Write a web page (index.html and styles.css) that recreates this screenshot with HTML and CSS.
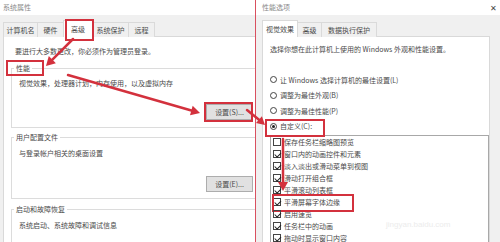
FILE: index.html
```html
<!DOCTYPE html>
<html>
	<head>
		<meta charset="UTF-8">
		<title>系统属性 - 性能选项</title>
		<link rel="stylesheet" href="styles.css">
	</head>
	<body>
		<div class="screen">

			<!-- 左边: 系统属性 -->
			<div class="win sys">
				<div class="title">系统属性</div>
				<div class="tabbar">
					<span class="tab w1">计算机名</span>
					<span class="tab w2">硬件</span>
					<span class="tab on w3 hl hl-tab">高级</span>
					<span class="tab w4">系统保护</span>
					<span class="tab w5">远程</span>
				</div>
				<div class="panel">
					<p class="note">要进行大多数更改，你必须作为管理员登录。</p>
					<fieldset class="group g1">
						<legend><span class="hl hl-legend">性能</span></legend>
						<p class="desc">视觉效果，处理器计划，内存使用，以及虚拟内存</p>
						<div class="btnrow r1"><span class="btn hl hl-btn">设置(S)...</span></div>
					</fieldset>
					<fieldset class="group g2">
						<legend>用户配置文件</legend>
						<p class="desc">与登录帐户相关的桌面设置</p>
						<div class="btnrow r2"><span class="btn">设置(E)...</span></div>
					</fieldset>
					<fieldset class="group g3">
						<legend>启动和故障恢复</legend>
						<p class="desc">系统启动、系统故障和调试信息</p>
					</fieldset>
				</div>
			</div>

			<!-- 右边: 性能选项 -->
			<div class="win perf">
				<div class="title"><span>性能选项</span><span class="close">✕</span></div>
				<div class="tabbar">
					<span class="tab on p1">视觉效果</span>
					<span class="tab p2">高级</span>
					<span class="tab p3">数据执行保护</span>
				</div>
				<div class="panel">
					<p class="intro">选择你想在此计算机上使用的 Windows 外观和性能设置。</p>
					<div class="radios">
						<div class="radio"><span class="dot"></span>让 Windows 选择计算机的最佳设置(L)</div>
						<div class="radio"><span class="dot"></span>调整为最佳外观(B)</div>
						<div class="radio"><span class="dot"></span>调整为最佳性能(P)</div>
						<div class="radio hl hl-radio"><span class="dot sel"></span>自定义(C):</div>
					</div>
					<div class="list">
						<div class="item"><span class="cb"></span>保存任务栏缩略图预览</div>
						<div class="item"><span class="cb on"></span>窗口内的动画控件和元素</div>
						<div class="item"><span class="cb on"></span>淡入淡出或滑动菜单到视图</div>
						<div class="item"><span class="cb on"></span>滑动打开组合框</div>
						<div class="item"><span class="cb on"></span>平滑滚动列表框</div>
						<div class="item hl hl-item"><span class="cb on"></span>平滑屏幕字体边缘</div>
						<div class="item"><span class="cb on"></span>启用速览</div>
						<div class="item"><span class="cb on"></span>任务栏中的动画</div>
						<div class="item"><span class="cb on"></span>拖动时显示窗口内容</div>
					</div>
				</div>
			</div>

			<!-- 红色箭头标注 -->
			<svg class="arrows" width="500" height="242" viewBox="0 0 500 242">
				<g stroke="#d3313d" stroke-width="2.5" stroke-linecap="round" fill="none">
					<path d="M73 39 L52.4 59.6"/>
					<path d="M68 75 L191.4 110.5"/>
					<path d="M247 110 L259 119.7"/>
					<path d="M283 139 L283 183"/>
				</g>
				<g fill="#d3313d">
					<polygon points="46,66 55.9,63.2 48.8,56.1"/>
					<polygon points="200,113 190,115.3 192.7,105.7"/>
					<polygon points="265,125 256,123.1 261.9,116.3"/>
					<polygon points="283,191 278,182 288,182"/>
				</g>
			</svg>
			<div class="watermark">jingyan.baidu.com</div>
		</div>
	</body>
</html>
```

FILE: styles.css
```css
*{
	box-sizing:border-box;
}
body{
	margin:0;
	background-color:#fff;
	font-family:"Noto Sans CJK SC","Liberation Sans",sans-serif;
	font-size:7px;
	color:#4a4a4a;
}
p{
	margin:0;
}
.screen{
	position:relative;
	display:flex;
	width:500px;
	height:242px;
	overflow:hidden;
}
.win{
	height:242px;
	overflow:hidden;
	background-color:#f0f0f0;
}
.title{
	height:15px;
	line-height:15px;
	background-color:#fff;
	color:#8a8a8a;
}
.tabbar{
	display:flex;
	align-items:flex-end;
	height:22px;
}
.tab{
	height:15px;
	line-height:14px;
	text-align:center;
	border:1px solid #dadada;
	border-bottom:none;
	margin-right:-1px;
	background-color:#f0f0f0;
	white-space:nowrap;
}
.tab.on{
	height:17px;
	line-height:16px;
	background-color:#fff;
	position:relative;
	z-index:1;
}
.panel{
	background-color:#fff;
	border:1px solid #d9d9d9;
	margin-top:-1px;
	height:220px;
}

/* 系统属性 */
.sys{
	width:255px;
	flex:none;
}
.sys .title{
	padding-left:3px;
}
.sys .tabbar{
	padding-left:3px;
}
.w1{width:35px;}
.w2{width:27px;}
.w3{width:30px;}
.w4{width:37px;}
.w5{width:27px;}
.sys .panel{
	margin-left:3px;
	width:262px;
}
.note{
	margin:10px 0 0 11px;
	line-height:9px;
}
.group{
	margin:0 5px 0 7px;
	padding:0 5px 0 2px;
	border:1px solid #dcdcdc;
	min-width:0;
}
.group legend{
	padding:0 2px;
	line-height:9px;
}
.group .desc{
	margin-left:5px;
	line-height:9px;
}
.g1{
	margin-top:8px;
	padding-bottom:7px;
}
.g1 .desc{
	margin-top:6px;
}
.g2{
	margin-top:5px;
	padding-bottom:6px;
}
.g2 .desc{
	margin-top:7px;
}
.g3{
	margin-top:6px;
	height:60px;
}
.g3 .desc{
	margin-top:7px;
}
.btnrow{
	display:flex;
	justify-content:flex-end;
}
.r1{
	margin-top:16px;
}
.r2{
	margin-top:18px;
}
.btn{
	width:47px;
	height:16px;
	line-height:14px;
	text-align:center;
	background-color:#e1e1e1;
	border:1px solid #adadad;
}

/* 性能选项 */
.perf{
	flex:1;
	border-left:1px solid #d9505f;
}
.perf .title{
	display:flex;
	justify-content:space-between;
	padding:0 3px 0 6px;
}
.close{
	color:#444;
	font-size:8px;
}
.perf .tabbar{
	padding-left:6px;
}
.p1{width:36px;}
.p2{width:25px;}
.p3{width:56px;}
.perf .panel{
	margin-left:6px;
	width:228px;
	padding-left:7px;
}
.intro{
	margin-top:8px;
	line-height:9px;
	white-space:nowrap;
}
.radios{
	margin-top:18px;
}
.radio{
	display:flex;
	align-items:center;
	height:15.5px;
	white-space:nowrap;
}
.dot{
	width:7px;
	height:7px;
	border:1px solid #444;
	border-radius:50%;
	margin-right:3px;
	display:flex;
	align-items:center;
	justify-content:center;
}
.dot.sel::after{
	content:'';
	width:3px;
	height:3px;
	border-radius:50%;
	background-color:#222;
}
.list{
	margin-top:1px;
	border:1px solid #a8a8a8;
	border-bottom:none;
	height:120px;
	padding-left:2px;
}
.item{
	display:flex;
	align-items:center;
	height:12px;
	white-space:nowrap;
}
.cb{
	position:relative;
	width:8px;
	height:8px;
	border:1px solid #444;
	margin-right:3px;
	flex:none;
}
.cb.on::after{
	content:'';
	position:absolute;
	left:1.8px;
	top:-0.5px;
	width:2.5px;
	height:4.8px;
	border:solid #222;
	border-width:0 1px 1px 0;
	transform:rotate(45deg);
}

/* 红框标注 */
.hl{
	position:relative;
}
.hl::after{
	content:'';
	position:absolute;
	border:2px solid #d3313d;
	pointer-events:none;
}
.hl-tab::after{
	left:1px;
	top:-2px;
	width:25px;
	height:18px;
}
.hl-legend::after{
	left:-10px;
	right:-14px;
	top:-3px;
	bottom:-3px;
}
.hl-btn::after{
	left:-3px;
	right:-1px;
	top:-3px;
	bottom:-3px;
}
.hl-radio::after{
	left:-5px;
	top:0;
	width:56px;
	height:14px;
}
.hl-item::after{
	left:-1px;
	top:-2px;
	width:78px;
	height:14px;
}
.arrows{
	position:absolute;
	left:0;
	top:0;
	pointer-events:none;
}
.watermark{
	position:absolute;
	left:386px;
	top:220px;
	font-family:"Liberation Sans",sans-serif;
	font-size:8px;
	color:#ececec;
}
```
